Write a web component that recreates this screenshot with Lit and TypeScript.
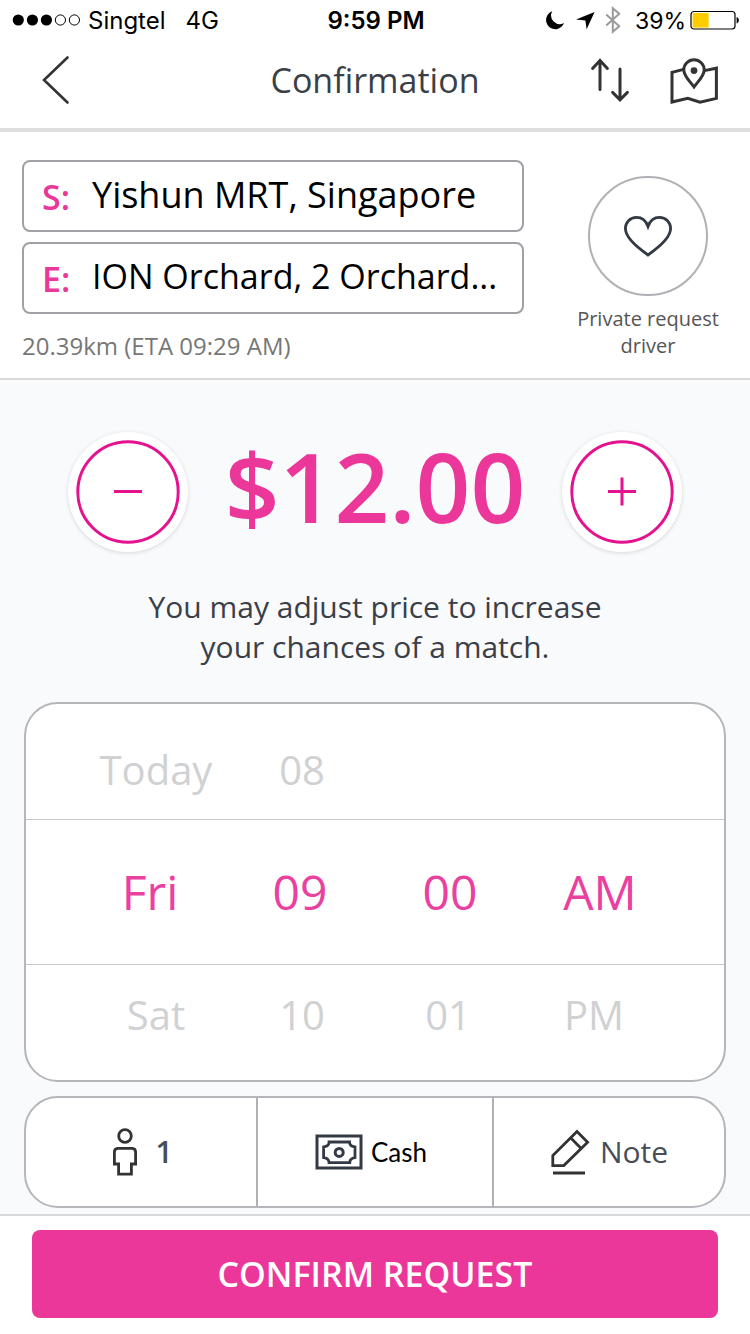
import { LitElement, html, css } from "lit";
import { customElement, state } from "lit/decorators.js";

interface WheelColumn {
  label: string;
  previous: string;
  current: string;
  next: string;
}

@customElement("status-bar")
class StatusBar extends LitElement {
  static styles = css`
    :host {
      box-sizing: border-box;
      display: grid;
      grid-template-columns: 1fr auto 1fr;
      align-items: center;
      height: 40px;
      padding: 2px 10px 0 12px;
      color: #000;
      font: 400 24px/38px Inter, "Liberation Sans", sans-serif;
    }
    .side {
      display: flex;
      align-items: center;
      gap: 8px;
    }
    .network {
      padding-left: 12px;
    }
    .right {
      justify-content: flex-end;
      gap: 14px;
      font-size: 23px;
    }
    .time {
      font-weight: 600;
    }
    svg {
      display: block;
      flex: none;
    }
    .battery {
      display: flex;
      align-items: center;
      gap: 4px;
    }
  `;

  render() {
    return html`
      <div class="side">
        <svg width="68" height="14" viewBox="0 0 68 14" aria-hidden="true">
          <circle cx="6.3" cy="6" r="5.6" />
          <circle cx="20.4" cy="6" r="5.6" />
          <circle cx="34.4" cy="6" r="5.6" />
          <g fill="none" stroke="#000">
            <circle cx="48.4" cy="6" r="5.1" />
            <circle cx="62.4" cy="6" r="5.1" />
          </g>
        </svg>
        <span>Singtel</span>
        <span class="network">4G</span>
      </div>
      <span class="time">9:59 PM</span>
      <div class="side right">
        <svg width="76" height="30" viewBox="0 0 76 30" aria-hidden="true">
          <path d="M7.3 5.3A9.2 9.2 0 1 0 19 17A8.6 8.6 0 0 1 7.3 5.3Z" />
          <path d="M49.6 6L41.6 23.2L40.4 14.4L31 13.4Z" />
          <path d="M61.2 8.6L74.2 20.2L67.8 25.8V2.2L74.2 7.8L61.2 19.4" fill="none" stroke="#9b9b9b" stroke-width="2" />
        </svg>
        <span class="battery">
          39%
          <svg width="50" height="22" viewBox="0 0 50 22" aria-hidden="true">
            <rect x="1" y="1.5" width="44" height="17.5" rx="3" fill="#fff" stroke="#000" stroke-width="1.2" />
            <rect x="2.6" y="3" width="16" height="14.6" fill="#fc0" />
            <path d="M46.6 7C49.6 7.6 49.6 12.8 46.6 13.6Z" />
          </svg>
        </span>
      </div>
    `;
  }
}

@customElement("time-wheel")
class TimeWheel extends LitElement {
  static styles = css`
    :host {
      display: block;
      overflow: hidden;
      border: 2px solid #b6b6ba;
      border-radius: 34px;
      background: #fff;
    }
    .row {
      display: grid;
      grid-template-columns: repeat(4, 146px);
      justify-content: center;
      align-items: center;
      height: 115px;
    }
    .middle {
      grid-template-columns: repeat(4, 150px);
      height: 144px;
      border-top: 1px solid #c8c9cb;
      border-bottom: 1px solid #c8c9cb;
    }
    button {
      padding: 0;
      border: 0;
      background: none;
      font: 400 40px/48px "Open Sans", "Noto Sans", sans-serif;
      color: #d0d1d3;
    }
    .above button {
      margin-top: 16px;
    }
    .below button {
      margin-bottom: 16px;
    }
    .middle button {
      font-size: 48px;
      line-height: 64px;
      color: #ea409f;
    }
  `;

  private columns: WheelColumn[] = [
    { label: "Day", previous: "Today", current: "Fri", next: "Sat" },
    { label: "Hour", previous: "08", current: "09", next: "10" },
    { label: "Minute", previous: "", current: "00", next: "01" },
    { label: "Period", previous: "", current: "AM", next: "PM" },
  ];

  render() {
    return html`
      <div class="row above">
        ${this.columns.map((c) => (c.previous ? html`<button type="button">${c.previous}</button>` : html`<span></span>`))}
      </div>
      <div class="row middle">
        ${this.columns.map((c) => html`<button type="button" aria-pressed="true" title=${c.label}>${c.current}</button>`)}
      </div>
      <div class="row below">
        ${this.columns.map((c) => html`<button type="button">${c.next}</button>`)}
      </div>
    `;
  }
}

@customElement("app-root")
class AppRoot extends LitElement {
  static styles = css`
    :host {
      display: flex;
      flex-direction: column;
      min-height: 100vh;
      background: #f9fafc;
      color: #3a3f48;
      font-family: "Open Sans", "Noto Sans", sans-serif;
    }
    * {
      box-sizing: border-box;
    }
    svg {
      display: block;
      flex: none;
    }
    button {
      padding: 0;
      border: 0;
      background: none;
      color: inherit;
      font-family: inherit;
    }
    .top {
      background: #fff;
      border-bottom: 4px solid #dedede;
    }
    .nav {
      display: grid;
      grid-template-columns: 1fr auto 1fr;
      align-items: center;
      height: 88px;
      padding: 0 30px 8px;
    }
    h1 {
      margin: 0;
      font-size: 34px;
      font-weight: 400;
      line-height: 48px;
    }
    .actions {
      display: flex;
      justify-content: flex-end;
      gap: 38px;
    }
    .back {
      justify-self: start;
      padding-left: 10px;
    }
    .trip {
      display: flex;
      justify-content: space-between;
      padding: 28px 22px 16px;
      background: #fff;
      border-bottom: 2px solid #d9d9d9;
    }
    .places {
      flex: 0 1 502px;
      min-width: 0;
      display: flex;
      flex-direction: column;
      gap: 10px;
    }
    .place {
      display: flex;
      align-items: center;
      height: 72px;
      padding: 0 18px;
      border: 2px solid #a0a0a6;
      border-radius: 8px;
    }
    .place label {
      flex: none;
      width: 50px;
      padding-top: 2px;
      color: #eb3799;
      font-size: 34px;
      font-weight: 600;
      line-height: 48px;
    }
    .place input {
      flex: 1;
      min-width: 0;
      height: 52px;
      padding: 0 0 4px;
      border: 0;
      outline: 0;
      background: none;
      color: #000;
      font: 400 36px/48px "Open Sans", "Noto Sans", sans-serif;
      text-overflow: ellipsis;
    }
    .place input.long {
      font-size: 34px;
    }
    .eta {
      margin: 0;
      padding-top: 6px;
      color: #777;
      font-size: 24px;
      line-height: 32px;
    }
    .driver {
      display: flex;
      flex-direction: column;
      align-items: center;
      gap: 9px;
      width: 160px;
      padding-top: 16px;
      color: #555;
      font-size: 20px;
      line-height: 27px;
    }
    .heart {
      display: grid;
      place-items: center;
      width: 120px;
      height: 120px;
      border: 2px solid #b0b0b5;
      border-radius: 50%;
    }
    main {
      flex: 1;
      padding: 52px 24px 6px;
    }
    .fare {
      display: grid;
      grid-template-columns: 120px 1fr 120px;
      align-items: center;
      height: 120px;
      padding: 0 44px;
    }
    .step {
      width: 120px;
      height: 120px;
      border-radius: 50%;
      background: #fff;
      box-shadow: 0 1px 4px rgba(0, 0, 0, 0.14);
    }
    output {
      text-align: center;
      color: #eb3799;
      font-size: 96px;
      font-weight: 600;
      line-height: 108px;
      padding-bottom: 12px;
    }
    .hint {
      max-width: 500px;
      margin: 35px auto;
      text-align: center;
      font-size: 30px;
      line-height: 40px;
    }
    .options {
      display: grid;
      grid-template-columns: 230fr 236fr 232fr;
      height: 112px;
      margin-top: 14px;
      overflow: hidden;
      border: 2px solid #b6b6ba;
      border-radius: 34px;
      background: #fff;
    }
    .option {
      display: flex;
      align-items: center;
      justify-content: center;
      gap: 10px;
      font-size: 30px;
      line-height: 40px;
      color: #484d58;
    }
    .option + .option {
      border-left: 2px solid #b0b0b5;
    }
    .riders {
      gap: 18px;
      padding-left: 4px;
      font-weight: 600;
    }
    .cash {
      gap: 8px;
      padding-right: 8px;
      color: #000;
      font-family: Lato, sans-serif;
      font-size: 26px;
    }
    footer {
      padding: 14px 32px 16px;
      background: #fff;
      border-top: 2px solid #d9d9d9;
    }
    .confirm {
      display: block;
      width: 100%;
      height: 88px;
      border-radius: 8px;
      background: #eb3799;
      color: #fff;
      font-size: 34px;
      font-weight: 600;
      line-height: 48px;
    }
  `;

  @state() private fare = 12;

  private adjust(by: number) {
    this.fare = Math.max(0, this.fare + by);
  }

  render() {
    return html`
      <header class="top">
        <status-bar></status-bar>
        <nav class="nav">
          <button class="back" type="button" aria-label="Back">
            <svg width="32" height="50" viewBox="0 0 32 50">
              <path d="M27.5 2.5L4 25L27.5 47.5" fill="none" stroke="#333" stroke-width="2.6" stroke-linecap="round" />
            </svg>
          </button>
          <h1>Confirmation</h1>
          <div class="actions">
            <button type="button" aria-label="Swap start and end">
              <svg width="40" height="46" viewBox="0 0 40 46">
                <g fill="none" stroke="#333" stroke-width="3" stroke-linecap="round">
                  <path d="M10 32.5V4M2.6 11.4L10 3.4L17.4 11.4" />
                  <path d="M30 12V42M22.6 35.4L30 42.8L37.4 35.4" />
                </g>
              </svg>
            </button>
            <button type="button" aria-label="Show map">
              <svg width="52" height="48" viewBox="0 0 52 48">
                <g fill="none" stroke="#333" stroke-width="3">
                  <path d="M15.6 13.4L4 16.4V46L19.8 42.2L32 46.2L48.4 42.4V12.2L36.4 14.6" />
                  <path d="M26 31C22 25.4 15.8 20 15.8 14A10.2 10.2 0 0 1 36.2 14C36.2 20 30 25.4 26 31Z" />
                </g>
                <circle cx="26" cy="14.6" r="3.4" fill="#333" />
              </svg>
            </button>
          </div>
        </nav>
      </header>

      <section class="trip">
        <div class="places">
          <div class="place">
            <label for="start">S:</label>
            <input id="start" type="text" readonly value="Yishun MRT, Singapore" />
          </div>
          <div class="place">
            <label for="end">E:</label>
            <input id="end" class="long" type="text" readonly value="ION Orchard, 2 Orchard..." />
          </div>
          <p class="eta">20.39km (ETA 09:29 AM)</p>
        </div>
        <button class="driver" type="button">
          <span class="heart">
            <svg width="50" height="42" viewBox="0 0 50 42">
              <path
                d="M25 11.4C22.8 5.4 18.8 2.4 13.6 2.4C7 2.4 2.4 7.4 2.4 13.6C2.4 23 14.4 32.6 25 40C35.6 32.6 47.6 23 47.6 13.6C47.6 7.4 43 2.4 36.4 2.4C31.2 2.4 27.2 5.4 25 11.4Z"
                fill="none"
                stroke="#343a44"
                stroke-width="2.8"
              />
            </svg>
          </span>
          <span>Private request driver</span>
        </button>
      </section>

      <main>
        <div class="fare">
          <button class="step" type="button" aria-label="Lower price" @click=${() => this.adjust(-1)}>
            <svg width="120" height="120" viewBox="0 0 120 120" fill="none" stroke="#e5128f" stroke-width="3">
              <circle cx="60" cy="60" r="50.2" />
              <path d="M46 59.5H74" />
            </svg>
          </button>
          <output>$${this.fare.toFixed(2)}</output>
          <button class="step" type="button" aria-label="Raise price" @click=${() => this.adjust(1)}>
            <svg width="120" height="120" viewBox="0 0 120 120" fill="none" stroke="#e5128f" stroke-width="3">
              <circle cx="60" cy="60" r="50.2" />
              <path d="M46 59.5H74M60 45.5V73.5" />
            </svg>
          </button>
        </div>
        <p class="hint">You may adjust price to increase your chances of a match.</p>

        <time-wheel></time-wheel>

        <div class="options">
          <button class="option riders" type="button">
            <svg width="24" height="48" viewBox="0 0 24 48" fill="none" stroke="#333" stroke-width="2.8">
              <circle cx="12" cy="8" r="6.3" />
              <path d="M4.6 20.4H19.4Q22.4 20.6 22.6 24V36H18.4V46.2H5.6V36H1.4V24Q1.6 20.6 4.6 20.4Z" />
            </svg>
            <span>1</span>
          </button>
          <button class="option cash" type="button">
            <svg width="48" height="36" viewBox="0 0 48 36" fill="none" stroke="#343a44" stroke-width="3">
              <rect x="2" y="2" width="44" height="32" />
              <path
                d="M14 8H34.6V9.4Q35.6 12.6 40 13V23.6Q35.6 24.2 34.8 27.6V28.6H14V27.6Q13 24.2 8.6 23.6V13Q13 12.6 14 9.4Z"
                stroke-width="2.8"
              />
              <circle cx="24.2" cy="18.4" r="4" />
            </svg>
            <span>Cash</span>
          </button>
          <button class="option" type="button">
            <svg width="40" height="46" viewBox="0 0 40 46" fill="none" stroke="#333" stroke-width="2.8">
              <path d="M27 2.6L37.6 13.2L13.8 36.6H2.8V26.6ZM20.8 9L31.2 19.4" />
              <path d="M3 44H35" />
            </svg>
            <span>Note</span>
          </button>
        </div>
      </main>

      <footer>
        <button class="confirm" type="button">CONFIRM REQUEST</button>
      </footer>
    `;
  }
}
